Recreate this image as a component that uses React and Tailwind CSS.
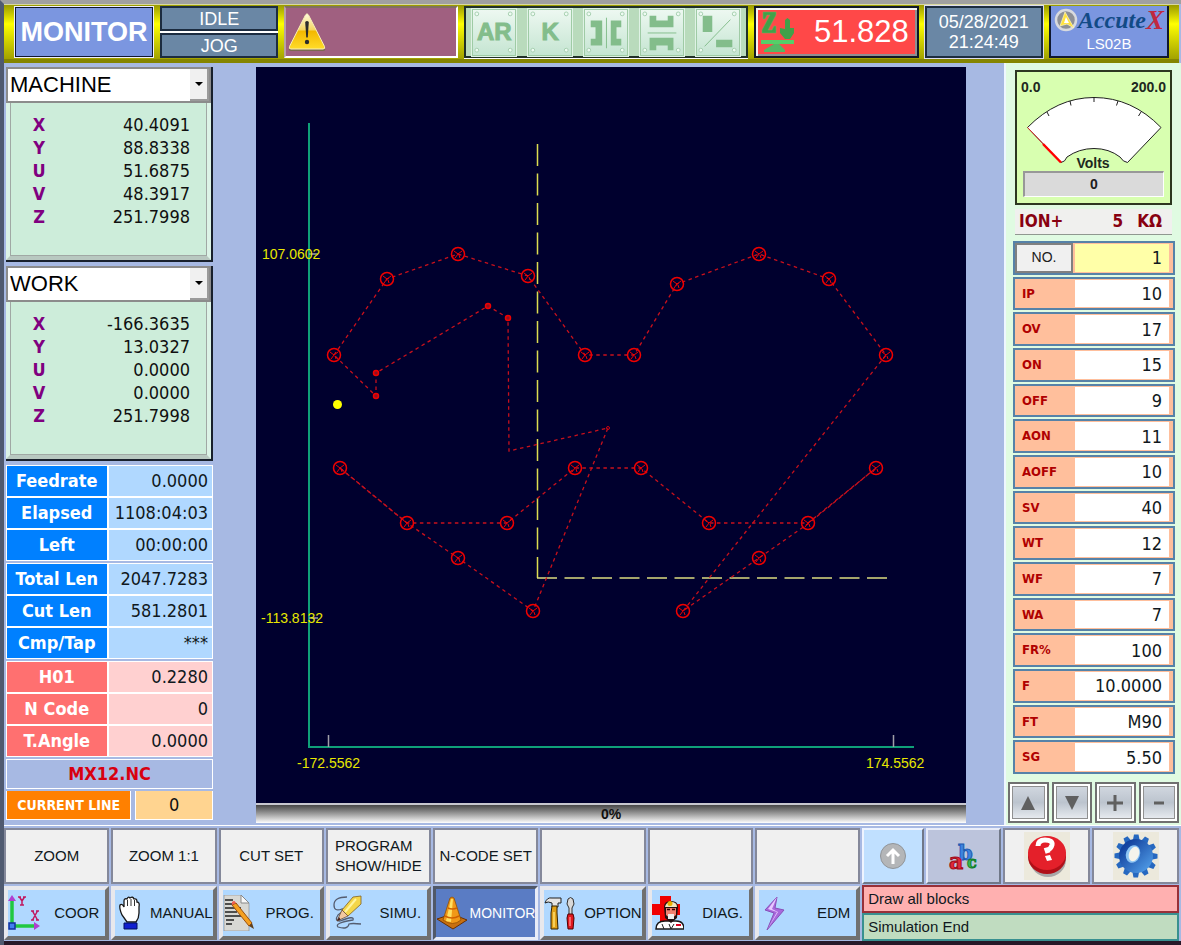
import React, { useState } from 'react';
import clsx from 'clsx';

const TAHOMA = "font-['DejaVu_Sans_Condensed','DejaVu_Sans',sans-serif]";
const ARIAL = "font-['Liberation_Sans',Arial,sans-serif]";

const MACHINE = [['X', '40.4091'], ['Y', '88.8338'], ['U', '51.6875'], ['V', '48.3917'], ['Z', '251.7998']];
const WORK = [['X', '-166.3635'], ['Y', '13.0327'], ['U', '0.0000'], ['V', '0.0000'], ['Z', '251.7998']];

const STATUS = [
    { tone: 'blue', rows: [['Feedrate', '0.0000'], ['Elapsed', '1108:04:03'], ['Left', '00:00:00']] },
    { tone: 'blue', rows: [['Total Len', '2047.7283'], ['Cut Len', '581.2801'], ['Cmp/Tap', '***']] },
    { tone: 'red', rows: [['H01', '0.2280'], ['N Code', '0'], ['T.Angle', '0.0000']] },
];

const PARAMS = [
    ['IP', '10'], ['OV', '17'], ['ON', '15'], ['OFF', '9'], ['AON', '11'], ['AOFF', '10'], ['SV', '40'],
    ['WT', '12'], ['WF', '7'], ['WA', '7'], ['FR%', '100'], ['F', '10.0000'], ['FT', 'M90'], ['SG', '5.50'],
];

const TOOLS = ['ZOOM', 'ZOOM 1:1', 'CUT SET', 'PROGRAM SHOW/HIDE', 'N-CODE SET', '', '', ''];

// Tool path, in screen units of the plot
const PATHS = [
    '334,355 387,279 458,254 528,276 585,355 634,355 677,284 759,254 829,279 886,355 683,611 759,558 809,523 876,468',
    '876,468 808,523 709,523 641,468 575,468 507,523 407,523 340,468',
    '340,468 407,523 458,558 533,611 608,428 509,451 508,318 488,306 376,373 376,396 334,355',
];
const NODES = [
    [334, 355], [387, 279], [458, 254], [528, 276], [585, 355], [634, 355], [677, 284], [759, 254], [829, 279],
    [886, 355], [340, 468], [407, 523], [507, 523], [575, 468], [641, 468], [709, 523], [808, 523], [876, 468],
    [458, 558], [759, 558], [533, 611], [683, 611],
];
const SMALL_NODES = [[488, 306], [508, 318], [376, 373], [376, 396]];

const WarningIcon = () => (
    <svg viewBox="0 0 38 40" className="h-10 w-[38px] shrink-0" aria-hidden="true">
        <defs>
            <linearGradient id="warn" x1="0" y1="0" x2="0" y2="1">
                <stop offset="0" stopColor="#fffbe0" />
                <stop offset="0.45" stopColor="#f5d661" />
                <stop offset="0.5" stopColor="#f4b800" />
                <stop offset="1" stopColor="#ffdc2a" />
            </linearGradient>
        </defs>
        <path d="M3 39 Q0 39 1 36 L17.5 4 Q19 1.5 20.5 4 L37 36 Q38 39 35 39 Z" fill="#7b6a50" />
        <path d="M3 37 Q.5 37 1.500 34.500 L17.5 3 Q19 .5 20.5 3 L36.500 34.5 Q37.5 37 35 37 Z" fill="url(#warn)" stroke="#f9efb8" strokeWidth="1" />
        <path d="M17.200 10 Q19 8 20.800 10 L19.800 25 Q19 26.500 18.200 25 Z" fill="#2b2b2b" />
        <circle cx="19" cy="30" r="2.200" fill="#2b2b2b" />
    </svg>
);

const Plate = ({ children, label }) => (
    <button aria-label={label} className="relative flex h-[47px] w-11 items-center justify-center border border-[#9fcba5] bg-linear-to-b from-[#edf8f1] to-[#c5e5d2] shadow-[0_0_0_1px_#dff2e5]">
        <svg viewBox="0 0 44 47" className="absolute inset-0 h-full w-full" fill="#eefaf2" stroke="#a5cfae" aria-hidden="true">
            <circle cx="4" cy="4" r="2" /><circle cx="39" cy="4" r="2" />
            <circle cx="4" cy="42" r="2" /><circle cx="39" cy="42" r="2" />
        </svg>
        {children}
    </button>
);

const PlateGlyph = ({ children }) => (
    <svg viewBox="0 0 44 47" className="absolute inset-0 h-full w-full" fill="#83bd8b" stroke="#83bd8b" strokeWidth="0" aria-hidden="true">
        {children}
    </svg>
);

const PlateText = ({ children }) => (
    <span className="relative text-[24px] leading-8 font-bold [-webkit-text-stroke:1px_#83bd8b]">{children}</span>
);

const Header = () => (
    <header className={clsx(ARIAL, 'grid grid-cols-[140fr_118fr_174fr_283fr_165fr_118fr_120fr] gap-1.5 border-t border-b-4 border-t-[#d8d8a0] border-b-[#858500] bg-linear-to-b from-[#9a9a00] via-[#ffff00] via-35% to-[#a2a200] py-px pr-2.5 pl-2.5')}>
        <div className="m-px flex h-[50px] items-center justify-center border border-[#101830] bg-[#7b96e0] text-[27px] font-bold text-white shadow-[0_0_0_1px_#eef]">
            MONITOR
        </div>
        <div className="flex flex-col gap-[2px] bg-white text-[18px] leading-5 text-white">
            <div className="flex h-[25px] items-center justify-center border-2 border-[#1c2c40] bg-[#6a87a5]">IDLE</div>
            <div className="flex h-[25px] items-center justify-center border-2 border-[#1c2c40] bg-[#6a87a5]">JOG</div>
        </div>
        <div className="flex items-center border-2 border-t-[#807060] border-l-[#b8a0a8] border-r-white border-b-white bg-[#a06080] pl-0.5">
            <WarningIcon />
        </div>
        <div className="flex items-center justify-between border-2 border-[#203028] bg-[#b9dbbc] px-1.5 text-[#83bd8b] shadow-[0_1px_0_#fff]">
            <Plate label="AR"><PlateText>AR</PlateText></Plate>
            <Plate label="K"><PlateText>K</PlateText></Plate>
            <Plate label="Horizontal gap">
                <PlateGlyph>
                    <path d="M6 11H18V37H6V30H11V18H6ZM38 11H27V37H38V30H33V18H38Z" />
                    <path d="M22.500 8V40" strokeWidth="1" />
                </PlateGlyph>
            </Plate>
            <Plate label="Vertical gap">
                <PlateGlyph>
                    <path d="M9 6H16V11H28V6H34V18H9ZM9 42H16V37H28V42H34V29H9Z" />
                    <path d="M7 24H37" strokeWidth="1" />
                </PlateGlyph>
            </Plate>
            <Plate label="Corner gap">
                <PlateGlyph>
                    <path d="M6 6H16V23H6ZM20 31H37V39H20Z" />
                    <path d="M8 38L35 10" strokeWidth="1" />
                </PlateGlyph>
            </Plate>
        </div>
        <div className="flex items-center justify-between border-2 border-[#101828] bg-[#ff4848] pr-2 pl-1 text-[31px] leading-8 text-white shadow-[inset_2px_2px_0_#f4f4f4,inset_-2px_-2px_0_#909090]">
            <svg viewBox="0 0 36 42" className="h-[42px] w-9" fill="#42a049" aria-hidden="true">
                <path d="M3 1H16V4L8 19H12L14 15H16V22H2V19L10 4H7L5 8H3Z" stroke="#70b060" strokeWidth="0.500" />
                <path d="M25 9L27.500 7L30 9V17H34V22L30 28H25L20 22V17L25 18Z" />
                <path d="M1 29H34V33H1Z" fill="#55cf68" />
                <path d="M14 33H19L25 39V41H4V39Z" fill="#55b864" />
            </svg>
            <span>51.828</span>
        </div>
        <div className="flex flex-col items-center justify-center border-2 border-[#1c2c40] bg-[#6a87a5] text-[18px] leading-5 text-white shadow-[0_0_0_1px_#dde]">
            <span>05/28/2021</span>
            <span>21:24:49</span>
        </div>
        <div className="flex flex-col items-center border-2 border-t-0 border-[#101830] bg-[#7b96e0] text-white">
            <div className="flex h-7 items-center">
                <svg viewBox="0 0 24 24" className="size-6" aria-hidden="true">
                    <circle cx="12" cy="12" r="10" fill="#8d9096" stroke="#d8dade" strokeWidth="2.500" />
                    <path d="M11 4L20 20L13 16L6 18Z" fill="#ffe23c" stroke="#fff7c0" strokeWidth="0.700" />
                    <path d="M12 9L15 15L10 15Z" fill="#fff" />
                </svg>
                <span className="font-['Liberation_Serif',serif] text-[24px] leading-7 font-bold text-[#124a86] italic">Accute</span>
                <span className="font-['Liberation_Serif',serif] text-[27px] leading-7 font-bold text-[#c02840] italic">X</span>
            </div>
            <span className="text-[15px] leading-5">LS02B</span>
        </div>
    </header>
);

const AxisPanel = ({ name, other, rows }) => (
    <section className="border-r-2 border-b-2 border-[#18202c] bg-[#a8a8a8]">
        <div className="relative border-2 border-[#8c8c8c] bg-white">
            <select aria-label="Coordinate system" defaultValue={name} className={clsx(ARIAL, 'block h-8 w-full appearance-none pl-0.5 text-[22px] leading-7 text-black')}>
                <option>{name}</option>
                <option>{other}</option>
            </select>
            <span className="pointer-events-none absolute inset-y-0 right-0 flex w-[19px] items-center justify-center border-r-2 border-b-2 border-[#9a9a9a] bg-[#f0f0f0]">
                <svg viewBox="0 0 8 4" className="h-1 w-2" aria-hidden="true"><path d="M0 0H8L4 4Z" /></svg>
            </span>
        </div>
        <div className="border-x-4 border-b-4 border-x-[#dcf3e6] border-b-[#b8c8c0] bg-[#cdedda]">
            <div className="border border-t-0 border-[#a0a8a4] pt-2.5 pr-4 pb-[27px] pl-4">
                <table className="w-full text-[18px] leading-[23px]">
                    <tbody>
                        {rows.map(([axis, value]) => (
                            <tr key={axis}>
                                <th scope="row" className="w-6 text-center font-bold text-[#800080]">{axis}</th>
                                <td className="text-right text-[#101010]">{value}</td>
                            </tr>
                        ))}
                    </tbody>
                </table>
            </div>
        </div>
    </section>
);

const StatusGroup = ({ tone, rows }) => (
    <dl className="grid grid-cols-[100fr_104fr] gap-[2px] border border-white bg-white text-[18px] leading-[30px]">
        {rows.map(([label, value]) => (
            <React.Fragment key={label}>
                <dt className={clsx('text-center font-bold whitespace-nowrap text-white', tone === 'blue' ? 'bg-[#0080ff]' : 'bg-[#ff7070]')}>{label}</dt>
                <dd className={clsx('pr-1 text-right text-[#101820]', tone === 'blue' ? 'bg-[#b0d8ff]' : 'bg-[#ffd0d0]')}>{value}</dd>
            </React.Fragment>
        ))}
    </dl>
);

const Plot = () => (
    <svg viewBox="256 67 710 736" className={clsx(ARIAL, 'block min-h-0 w-full flex-1 bg-[#00002e] text-[14px]')} role="img" aria-label="Tool path">
        <path d="M309 123V747H914" fill="none" stroke="#0fa078" strokeWidth="2" />
        <path d="M328.500 735V747M893.500 735V747M309 254H318M309 618H318" stroke="#a0a0a8" strokeWidth="1.500" />
        <path d="M537.500 144V578" stroke="#dcdc50" strokeWidth="1.500" strokeDasharray="22 7.500" />
        <path d="M537 578H888" stroke="#dcdc80" strokeWidth="1.500" strokeDasharray="20 7.500" />
        {PATHS.map((points) => (
            <polyline key={points} points={points} fill="none" stroke="#c8101c" strokeWidth="1.300" strokeDasharray="3.500 3.500" />
        ))}
        {NODES.map(([x, y]) => (
            <g key={`${x}-${y}`} fill="none" stroke="#f00000">
                <circle cx={x} cy={y} r="6.500" strokeWidth="1.500" />
                <path d={`M${x - 4} ${y - 3}L${x} ${y}L${x + 4} ${y - 3}M${x} ${y}L${x - 3} ${y + 4}M${x + 1} ${y + 1}L${x + 2} ${y + 4}`} />
            </g>
        ))}
        {SMALL_NODES.map(([x, y]) => (
            <circle key={`${x}-${y}`} cx={x} cy={y} r="2.500" fill="#901020" stroke="#f00000" strokeWidth="1.500" />
        ))}
        <circle cx="608" cy="428" r="1.500" fill="none" stroke="#d00010" />
        <circle cx="337.500" cy="404.500" r="4.500" fill="#ffff00" />
        <g fill="#e8e800">
            <text x="262" y="259">107.0602</text>
            <text x="261" y="623">-113.8132</text>
            <text x="297" y="768">-172.5562</text>
            <text x="866" y="768">174.5562</text>
        </g>
    </svg>
);

const Gauge = () => (
    <div className="border-2 border-[#2c3820] bg-[#d8ffb0] px-0.5 pb-1.5">
        <svg viewBox="1018 72 149 99" className={clsx(ARIAL, 'block w-full text-[14px] font-bold')} role="img" aria-label="Volts gauge, 0.0 to 200.0">
            <path d="M1026.500 127.500Q1056 97.500 1093 97.500Q1131 97.500 1160 127.500L1126.500 162.500Q1122 162 1119 157Q1108 148.500 1093 148.500Q1078 148.500 1066 157Q1064 162 1060 162.500Z" fill="#fff" stroke="#202020" />
            <path d="M1046 112L1048 116M1069 101L1070 105.500M1093 97V102M1117 101L1115.500 105.500M1140 112L1137.500 116" stroke="#202020" />
            <path d="M1026.500 127.500L1060 162.500" stroke="#e83030" />
            <path d="M1042 144L1060 162.500" stroke="#ff0000" strokeWidth="2.500" />
            <g fill="#202820">
                <text x="1020" y="92">0.0</text>
                <text x="1165" y="92" textAnchor="end">200.0</text>
                <text x="1092" y="168" textAnchor="middle">Volts</text>
            </g>
        </svg>
        <output className={clsx(ARIAL, 'mx-1 block border-t-2 border-l-2 border-t-[#989898] border-l-[#989898] border-r border-b border-r-white border-b-white bg-[#dadada] text-center text-[14px] leading-[23px] font-bold text-[#202020]')}>0</output>
    </div>
);

const ParamRow = ({ label, value }) => (
    <div className="flex min-h-0 flex-1 border-2 border-[#5682a8] bg-[#ffbf9c]">
        <label htmlFor={`param-${label}`} className="flex w-[60px] shrink-0 items-center pl-[7px] text-[13px] font-bold text-[#b00000]">{label}</label>
        <input id={`param-${label}`} defaultValue={value} className="my-px mr-1 min-w-0 flex-1 bg-white pr-[7px] text-right text-[18px] text-[#101820]" />
    </div>
);

const Stepper = ({ label, children }) => (
    <button aria-label={label} className="flex h-[41px] flex-1 items-center justify-center border-2 border-[#707070] bg-linear-to-b from-[#d4dae2] via-[#bcc4ce] to-[#eef1f5] shadow-[inset_0_0_0_2px_#fff,inset_0_0_0_3px_#909090]">
        <svg viewBox="0 0 20 20" className="size-5" fill="#606060" aria-hidden="true">{children}</svg>
    </button>
);

const CoorIcon = () => (
    <svg viewBox="0 0 32 36" className="h-9 w-8 shrink-0" aria-hidden="true">
        <path d="M4 30V6" stroke="#20c840" strokeWidth="3.500" /><path d="M4 31H28" stroke="#20c840" strokeWidth="3.500" />
        <path d="M4 0L8 6H0ZM32 31L26 27V35Z" fill="#b040d0" />
        <rect x="1" y="28" width="6" height="6" fill="#4080f0" stroke="#1030a0" strokeWidth="1.500" />
        <g fill="none" stroke="#c01860" strokeWidth="1.500"><path d="M10 2H13M15 2H18M11.500 2L14 6L16.500 2M14 6V10M12 10H16" /><path d="M23 16H26M28 16H31M24.500 16L29.500 25M29.500 16L24.500 25M23 25H26M28 25H31" /></g>
    </svg>
);

const HandIcon = () => (
    <svg viewBox="0 0 32 36" className="h-9 w-8 shrink-0" aria-hidden="true">
        <path d="M12 27L7 20Q4 13 5 10Q7 8 9 12V6Q9 3 12 4Q13 1 15 3Q18 1 19 4Q22 3 22 7Q25 7 24 12V18Q24 23 21 27Z" fill="#fff" stroke="#181818" strokeWidth="1.300" />
        <path d="M12.500 5V11M16 4V11M19.500 5V11" stroke="#303030" />
        <path d="M9 28H22V34H9Z" fill="#1020d0" stroke="#001060" />
    </svg>
);

const ProgIcon = () => (
    <svg viewBox="0 0 32 36" className="h-9 w-8 shrink-0" aria-hidden="true">
        <path d="M1 0H18L26 8V36H1Z" fill="#d8d8d4" stroke="#909090" strokeWidth="0.700" />
        <path d="M18 0V8H26Z" fill="#f8f8f8" stroke="#888" />
        <path d="M2 5H10M2 9H14M2 13H18M2 17H14M2 21H18M3 25H11M3 29H9" stroke="#202020" strokeWidth="1.700" />
        <path d="M9 10L13 8L29 28L26 31Z" fill="#f5a020" stroke="#9a5010" /><path d="M9 10L13 8L11.500 6Q8 6 9 10Z" fill="#f06050" /><path d="M26 31L29 28L31 34Z" fill="#604020" />
    </svg>
);

const SimuIcon = () => (
    <svg viewBox="0 0 32 36" className="h-9 w-8 shrink-0" aria-hidden="true">
        <path d="M17 2Q4 2 4 10Q4 17 12 14Q16 14 8 20Q4 26 10 26Q25 20 23 25Q4 28 8 32Q18 35 19 29Q22 28 31 29" fill="none" stroke="#555d70" strokeWidth="1.300" />
        <path d="M12 15L23 2L31 1V9L18 21Z" fill="#f4d64a" stroke="#806020" strokeWidth="0.800" /><path d="M15 17L26 4" stroke="#fff4a0" strokeWidth="2" />
        <path d="M12 15L18 21L7 26Z" fill="#f2c8a0" stroke="#705038" strokeWidth="0.800" /><path d="M7 26L9 22L10.500 24.500Z" fill="#402020" />
    </svg>
);

const ConeIcon = () => (
    <svg viewBox="0 0 32 36" className="h-9 w-8 shrink-0" aria-hidden="true">
        <path d="M1 24L16 19L31 25L17 34Z" fill="#c87010" stroke="#693000" />
        <path d="M14 3Q16 1 18 3L25 25Q17 32 7 25Z" fill="#f09818" stroke="#904c00" strokeWidth="0.800" />
        <path d="M15 4L10 26L15 27L17 4Z" fill="#ffe060" /><path d="M12 13Q16 15 21 13M9 21Q16 25 23 21" fill="none" stroke="#d06000" strokeWidth="1.500" />
    </svg>
);

const OptionIcon = () => (
    <svg viewBox="0 0 32 36" className="h-9 w-8 shrink-0" aria-hidden="true">
        <path d="M1 8Q3 2 8 3H17V8H14V12H8V8Q4 6 1 8Z" fill="#e4e4e4" stroke="#202020" />
        <path d="M8 11H13V18L14 34H7V18Z" fill="#e0a018" stroke="#302000" /><path d="M10 17V32" stroke="#ffe070" strokeWidth="1.500" />
        <path d="M24 4Q26.500 1 29 4L30 9L28 13V20H25V13L23 9Z" fill="#d8d8d8" stroke="#303030" />
        <path d="M24 19H29L30 23L29 34H24L23 23Z" fill="#e01820" stroke="#500000" /><path d="M26 22V31" stroke="#ff8080" strokeWidth="1.500" />
    </svg>
);

const DiagIcon = () => (
    <svg viewBox="0 0 32 36" className="h-9 w-8 shrink-0" aria-hidden="true">
        <path d="M8 1H19V9H28V20H19V29H8V20H0V9H8Z" fill="#f00000" />
        <path d="M4 34Q4 26 13 26H24Q32 26 32 34Z" fill="#fff" stroke="#181818" strokeWidth="1.500" />
        <path d="M12 12Q12 6 19 6Q26 6 26 12L25 23L19 28L13 23Z" fill="#201010" />
        <path d="M14 13H24V20L19 24L14 20Z" fill="#f08070" /><path d="M13 12Q14 7 19 7Q25 7 25 12Z" fill="#f0e8c0" /><circle cx="18" cy="8.500" r="2.500" fill="#e8b000" />
        <path d="M15 14.500H18M20 14.500H23" stroke="#300000" strokeWidth="1.500" /><path d="M16 19H22V24H16Z" fill="#eeeeee" />
        <path d="M10 29L12 34M17 29L19 34L22 29" stroke="#202020" fill="none" /><path d="M24 30H29" stroke="#e00020" strokeWidth="2" />
    </svg>
);

const EdmIcon = () => (
    <svg viewBox="0 0 32 36" className="h-9 w-8 shrink-0" aria-hidden="true">
        <path d="M18 2L6 15L15 18L8 35L25 15L16 13Z" fill="#a868dc" stroke="#8850b8" strokeLinejoin="round" />
        <path d="M18 2L9 14L18 17L8 35L19 17L13 14Z" fill="#e8c8ff" />
    </svg>
);

const NAV = [
    ['COOR', CoorIcon], ['MANUAL', HandIcon], ['PROG.', ProgIcon], ['SIMU.', SimuIcon],
    ['MONITOR', ConeIcon], ['OPTION', OptionIcon], ['DIAG.', DiagIcon], ['EDM', EdmIcon],
];

const GEAR_TEETH = [0, 30, 60, 90, 120, 150, 180, 210, 240, 270, 300, 330];

const BottomBar = ({ page, setPage }) => (
    <footer className={clsx(ARIAL, 'grid grid-cols-[857fr_317fr] gap-x-0.5 border-t border-b-4 border-t-white border-b-[#281828] pt-0.5 pr-0.5 text-[15px] text-[#101820]')}>
        <div className="grid grid-cols-8 gap-x-0.5">
            {TOOLS.map((tool, i) => (
                <button key={i} className="flex h-[56px] items-center justify-center border-2 border-[#84889a] bg-[#f0f0f0] text-left leading-5">
                    <span className={tool.startsWith('PROGRAM') ? 'w-[87px]' : undefined}>{tool}</span>
                </button>
            ))}
        </div>
        <div className="grid grid-cols-[62fr_75fr_87fr_87fr] gap-x-0.5">
            <button aria-label="Up" className="flex items-center justify-center border-2 border-t-[#eef4ff] border-l-[#eef4ff] border-r-[#707888] border-b-[#707888] bg-[#c0e0ff]">
                <svg viewBox="0 0 28 28" className="size-7" aria-hidden="true">
                    <circle cx="14" cy="14" r="12.500" fill="#b4b6b8" stroke="#909498" />
                    <path d="M14 22V8M8 14L14 8L20 14" stroke="#fff" strokeWidth="3" fill="none" />
                </svg>
            </button>
            <button aria-label="Letters" className="flex items-center justify-center border-2 border-t-[#e8ecf8] border-l-[#e8ecf8] border-r-[#707888] border-b-[#707888] bg-[#bcc4dc]">
                <svg viewBox="0 0 36 36" className="size-9 overflow-visible font-['DejaVu_Serif',serif] font-bold" aria-hidden="true">
                    <text x="12" y="22" fontSize="21" fill="#3c84e0" stroke="#2058b0">b</text>
                    <text x="3" y="31" fontSize="22" fill="#e02838" stroke="#a00818">a</text>
                    <text x="21" y="30" fontSize="16" fill="#38b850" stroke="#108028">c</text>
                </svg>
            </button>
            <button aria-label="Help" className="flex items-center justify-center border-2 border-[#84889a] bg-[#f0f0f0]">
                <svg viewBox="0 0 46 48" className="h-12 w-[46px] bg-[#ece9dc]" aria-hidden="true">
                    <ellipse cx="24" cy="28" rx="18" ry="17" fill="#a8a8a8" />
                    <ellipse cx="23" cy="25" rx="19" ry="17" fill="#b01018" />
                    <ellipse cx="23" cy="21" rx="19" ry="17" fill="#e4202a" />
                    <path d="M14 14Q14 8 21 8Q29 8 28 13Q27 17 23 18L24 21" fill="none" stroke="#fff" strokeWidth="5" />
                    <path d="M21 24L26 23L28 28L23 29Z" fill="#fff" />
                </svg>
            </button>
            <button aria-label="Settings" className="flex items-center justify-center border-2 border-[#84889a] bg-[#f0f0f0]">
                <svg viewBox="0 0 46 48" className="h-12 w-[46px] bg-[#ece9dc]" aria-hidden="true">
                    <defs>
                        <linearGradient id="gear" x1="0" y1="0" x2="1" y2="1">
                            <stop offset="0.2" stopColor="#1444a0" />
                            <stop offset="1" stopColor="#58a8f0" />
                        </linearGradient>
                    </defs>
                    <g fill="#2668c0">
                        {GEAR_TEETH.map((a) => <path key={a} d="M19.500 10L21 2.500H25.500L27 10Z" transform={`rotate(${a} 23 24)`} />)}
                    </g>
                    <circle cx="23" cy="24" r="17" fill="url(#gear)" />
                    <ellipse cx="20" cy="22" rx="7" ry="9" fill="#8cc4f4" transform="rotate(20 20 22)" />
                    <ellipse cx="21" cy="22" rx="5" ry="7.500" fill="#f4f4ec" transform="rotate(20 21 22)" />
                </svg>
            </button>
        </div>
        <nav className="grid grid-cols-8 gap-x-0.5 pt-0.5">
            {NAV.map(([name, Icon]) => (
                <button
                    key={name}
                    onClick={() => setPage(name)}
                    className={clsx(
                        'flex h-[54px] min-w-0 items-center justify-between whitespace-nowrap',
                        name.length > 5 ? 'pr-0' : 'pr-1.5',
                        page === name
                            ? 'border-3 border-t-[#505868] border-l-[#505868] border-r-[#e8ecf8] border-b-[#e8ecf8] bg-[#5a7cc4] text-[14px] text-white'
                            : 'border-4 border-t-[#e8e8ec] border-l-[#e8e8ec] border-r-[#707070] border-b-[#707070] bg-[#b0d8ff]'
                    )}
                >
                    <Icon />
                    <span>{name}</span>
                </button>
            ))}
        </nav>
        <div className="mt-px flex flex-col leading-6">
            <p className="flex flex-1 items-center border-2 border-[#983038] bg-[#ffb0b0] pl-1">Draw all blocks</p>
            <p className="flex flex-1 items-center border-2 border-[#389090] bg-[#c0dcc0] pl-1">Simulation End</p>
        </div>
    </footer>
);

const App = () => {
    const [page, setPage] = useState('MONITOR');

    return (
        <div className={clsx(TAHOMA, 'flex min-h-screen flex-col border-t-4 border-l-4 border-t-[#a0a0a0] border-l-[#505a70] bg-[#a7b9e3]')}>
            <div className="pr-0.5">
                <Header />
            </div>
            <main className="grid min-h-0 flex-1 grid-cols-[207px_1fr_177px] pl-0.5">
                <div className="flex flex-col gap-1 pt-1">
                    <AxisPanel name="MACHINE" other="WORK" rows={MACHINE} />
                    <AxisPanel name="WORK" other="MACHINE" rows={WORK} />
                    <div className="flex flex-col gap-0.5">
                        {STATUS.map((group) => <StatusGroup key={group.rows[0][0]} {...group} />)}
                        <div className="border border-white text-center text-[18px] leading-7 font-bold text-[#d80010]">MX12.NC</div>
                        <div className="grid grid-cols-[126fr_78fr] gap-1">
                            <div className="border border-t-0 border-white bg-[#ff8000] text-center text-[14px] leading-7 font-bold whitespace-nowrap text-white">CURRENT LINE</div>
                            <div className="border border-t-0 border-white bg-[#ffd490] text-center text-[18px] leading-7 text-[#101010]">0</div>
                        </div>
                    </div>
                </div>

                <div className="mr-[38px] ml-[43px] flex flex-col pt-1 pb-0.5">
                    <Plot />
                    <div role="progressbar" aria-valuenow={0} className={clsx(ARIAL, 'border-t-2 border-[#c8c8d0] bg-linear-to-b from-[#484848] to-white text-center text-[14px] leading-[18px] font-bold text-[#101010]')}>0%</div>
                </div>

                <aside className="flex min-h-0 flex-col border-l-2 border-[#eef6ff] bg-[#e0fbe2] pr-0.5 pb-0.5 pl-0.5">
                    <div className="px-[7px] pt-[7px]">
                        <Gauge />
                        <div className="mt-1 flex h-[26px] items-center justify-between border-b border-[#909890] bg-[#f0f0ee] pr-2.5 pl-1 text-[17px] font-bold text-[#880010]">
                            <span>ION+</span>
                            <span className="flex gap-3.5"><span>5</span><span>KΩ</span></span>
                        </div>
                    </div>
                    <div className="mt-1.5 mr-1 mb-2 ml-[5px] flex min-h-0 flex-1 flex-col gap-0.5">
                        <div className="flex min-h-0 flex-1 border-2 border-[#5682a8] bg-[#ffbf9c]">
                            <button className={clsx(ARIAL, 'w-[58px] shrink-0 border-2 border-[#808080] bg-[#f0f0f0] text-[14px] text-[#202020]')}>NO.</button>
                            <input aria-label="NO." defaultValue="1" className="my-px mr-1 ml-0.5 min-w-0 flex-1 bg-[#ffffa8] pr-[7px] text-right text-[18px] text-[#101820]" />
                        </div>
                        {PARAMS.map(([label, value]) => <ParamRow key={label} label={label} value={value} />)}
                    </div>
                    <div className="flex gap-[3px]">
                        <Stepper label="Previous"><path d="M10 3L17 17H3Z" /></Stepper>
                        <Stepper label="Next"><path d="M3 3H17L10 17Z" /></Stepper>
                        <Stepper label="Increase"><path d="M8.500 2H11.500V8.500H18V11.500H11.500V18H8.500V11.500H2V8.500H8.500Z" /></Stepper>
                        <Stepper label="Decrease"><path d="M5 8.500H15V11.500H5Z" /></Stepper>
                    </div>
                </aside>
            </main>
            <BottomBar page={page} setPage={setPage} />
        </div>
    );
};

export default App;
